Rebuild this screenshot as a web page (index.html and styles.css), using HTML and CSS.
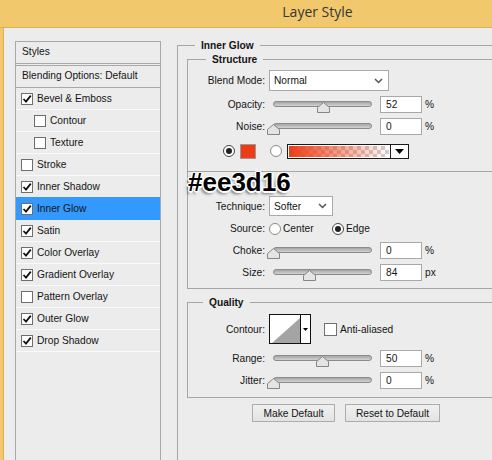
FILE: index.html
```html
<!DOCTYPE html>
<html lang="en">
    <head>
        <meta charset="UTF-8">
        <meta name="viewport" content="width=device-width, initial-scale=1.0">
        <title>Layer Style</title>
        <link rel="stylesheet" href="styles.css">
    </head>
    <body>
        <div class="titlebar">Layer Style</div>
        <div class="window">
            <div class="stylesPanel">
                <div class="head">Styles</div>
                <div class="blending">Blending Options: Default</div>
                <div class="item"><span class="check"><svg width="10" height="10" viewBox="0 0 10 10"><path d="M1.5 5l2.5 2.6 4.8-6" fill="none" stroke="#111" stroke-width="1.8"/></svg></span>Bevel &amp; Emboss</div>
                <div class="item sub"><span class="check"></span>Contour</div>
                <div class="item sub"><span class="check"></span>Texture</div>
                <div class="item"><span class="check"></span>Stroke</div>
                <div class="item"><span class="check"><svg width="10" height="10" viewBox="0 0 10 10"><path d="M1.5 5l2.5 2.6 4.8-6" fill="none" stroke="#111" stroke-width="1.8"/></svg></span>Inner Shadow</div>
                <div class="item active"><span class="check"><svg width="10" height="10" viewBox="0 0 10 10"><path d="M1.5 5l2.5 2.6 4.8-6" fill="none" stroke="#111" stroke-width="1.8"/></svg></span>Inner Glow</div>
                <div class="item"><span class="check"><svg width="10" height="10" viewBox="0 0 10 10"><path d="M1.5 5l2.5 2.6 4.8-6" fill="none" stroke="#111" stroke-width="1.8"/></svg></span>Satin</div>
                <div class="item"><span class="check"><svg width="10" height="10" viewBox="0 0 10 10"><path d="M1.5 5l2.5 2.6 4.8-6" fill="none" stroke="#111" stroke-width="1.8"/></svg></span>Color Overlay</div>
                <div class="item"><span class="check"><svg width="10" height="10" viewBox="0 0 10 10"><path d="M1.5 5l2.5 2.6 4.8-6" fill="none" stroke="#111" stroke-width="1.8"/></svg></span>Gradient Overlay</div>
                <div class="item"><span class="check"></span>Pattern Overlay</div>
                <div class="item"><span class="check"><svg width="10" height="10" viewBox="0 0 10 10"><path d="M1.5 5l2.5 2.6 4.8-6" fill="none" stroke="#111" stroke-width="1.8"/></svg></span>Outer Glow</div>
                <div class="item"><span class="check"><svg width="10" height="10" viewBox="0 0 10 10"><path d="M1.5 5l2.5 2.6 4.8-6" fill="none" stroke="#111" stroke-width="1.8"/></svg></span>Drop Shadow</div>
            </div>

            <div class="options">
                <fieldset class="group outer">
                    <legend>Inner Glow</legend>

                    <fieldset class="group structure">
                        <legend>Structure</legend>
                        <div class="row">
                            <span class="lbl">Blend Mode:</span>
                            <div class="dropdown blendMode">Normal<svg width="9" height="6" viewBox="0 0 9 6"><path d="M1 1l3.5 3.5L8 1" fill="none" stroke="#555" stroke-width="1.5"/></svg></div>
                        </div>
                        <div class="row slideRow">
                            <span class="lbl">Opacity:</span>
                            <div class="slider"><span class="thumb" style="left:52%"><svg width="13" height="11" viewBox="0 0 13 11"><path d="M0.5 10.5V5.5L6.5 0.5l6 5v5z" fill="#e4e4e4" stroke="#858585"/></svg></span></div>
                            <input class="num" type="text" value="52">
                            <span class="unit">%</span>
                        </div>
                        <div class="row">
                            <span class="lbl">Noise:</span>
                            <div class="slider"><span class="thumb" style="left:0%"><svg width="13" height="11" viewBox="0 0 13 11"><path d="M0.5 10.5V5.5L6.5 0.5l6 5v5z" fill="#e4e4e4" stroke="#858585"/></svg></span></div>
                            <input class="num" type="text" value="0">
                            <span class="unit">%</span>
                        </div>
                        <div class="row colorRow">
                            <span class="radio on"></span>
                            <span class="swatch"></span>
                            <span class="radio second"></span>
                            <div class="gradient">
                                <span class="gradientBar"></span>
                                <span class="gradientBtn"><svg width="9" height="5" viewBox="0 0 9 5"><path d="M0 0h9L4.5 5z" fill="#000"/></svg></span>
                            </div>
                        </div>
                    </fieldset>

                    <fieldset class="group elements">
                        <div class="note">#ee3d16</div>
                        <div class="row techRow">
                            <span class="lbl">Technique:</span>
                            <div class="dropdown technique">Softer<svg width="9" height="6" viewBox="0 0 9 6"><path d="M1 1l3.5 3.5L8 1" fill="none" stroke="#555" stroke-width="1.5"/></svg></div>
                        </div>
                        <div class="row sourceRow">
                            <span class="lbl">Source:</span>
                            <span class="option"><span class="radio"></span>Center</span>
                            <span class="option"><span class="radio on"></span>Edge</span>
                        </div>
                        <div class="row">
                            <span class="lbl">Choke:</span>
                            <div class="slider"><span class="thumb" style="left:0%"><svg width="13" height="11" viewBox="0 0 13 11"><path d="M0.5 10.5V5.5L6.5 0.5l6 5v5z" fill="#e4e4e4" stroke="#858585"/></svg></span></div>
                            <input class="num" type="text" value="0">
                            <span class="unit">%</span>
                        </div>
                        <div class="row">
                            <span class="lbl">Size:</span>
                            <div class="slider"><span class="thumb" style="left:37%"><svg width="13" height="11" viewBox="0 0 13 11"><path d="M0.5 10.5V5.5L6.5 0.5l6 5v5z" fill="#e4e4e4" stroke="#858585"/></svg></span></div>
                            <input class="num" type="text" value="84">
                            <span class="unit">px</span>
                        </div>
                    </fieldset>

                    <fieldset class="group quality">
                        <legend>Quality</legend>
                        <div class="row contourRow">
                            <span class="lbl">Contour:</span>
                            <div class="contour">
                                <svg class="curve" width="30" height="28" viewBox="0 0 30 28"><path d="M2 28L30 3v25z" fill="#a4a4a4"/></svg>
                                <span class="contourBtn"><svg width="5" height="3" viewBox="0 0 5 3"><path d="M0 0h5L2.5 3z" fill="#000"/></svg></span>
                            </div>
                            <span class="box"></span>
                            <span>Anti-aliased</span>
                        </div>
                        <div class="row slideRow">
                            <span class="lbl">Range:</span>
                            <div class="slider"><span class="thumb" style="left:51%"><svg width="13" height="11" viewBox="0 0 13 11"><path d="M0.5 10.5V5.5L6.5 0.5l6 5v5z" fill="#e4e4e4" stroke="#858585"/></svg></span></div>
                            <input class="num" type="text" value="50">
                            <span class="unit">%</span>
                        </div>
                        <div class="row">
                            <span class="lbl">Jitter:</span>
                            <div class="slider"><span class="thumb" style="left:0%"><svg width="13" height="11" viewBox="0 0 13 11"><path d="M0.5 10.5V5.5L6.5 0.5l6 5v5z" fill="#e4e4e4" stroke="#858585"/></svg></span></div>
                            <input class="num" type="text" value="0">
                            <span class="unit">%</span>
                        </div>
                    </fieldset>

                    <div class="buttons">
                        <button class="btn makeDefault">Make Default</button>
                        <button class="btn resetDefault">Reset to Default</button>
                    </div>
                </fieldset>
            </div>
        </div>
    </body>
</html>
```

FILE: styles.css
```css
body {
    margin: 0;
    width: 492px;
    height: 460px;
    overflow: hidden;
    background: #f1c86b;
    font-family: "Liberation Sans", Arial, sans-serif;
    font-size: 10.2px;
    color: #141414;
}
.titlebar {
    height: 27px;
    padding-left: 143px;
    line-height: 24px;
    border-bottom: 1px solid #d9b05c;
    text-align: center;
    font-family: "Open Sans", sans-serif;
    font-size: 14px;
    color: #363636;
}
.window {
    display: flex;
    height: 432px;
    margin-left: 3px;
    border-left: 1px solid #d9b05c;
    background: #ececec;
}

/* left list */
.stylesPanel {
    flex: none;
    width: 144px;
    margin: 13px 0 0 11px;
    border: 1px solid #a8a8a8;
    border-bottom: none;
}
.head, .blending {
    height: 21px;
    line-height: 20px;
    padding-left: 6px;
}
.head {
    border-bottom: 3px double #a8a8a8;
}
.blending {
    border-bottom: 1px solid #a8a8a8;
}
.item {
    display: flex;
    align-items: center;
    height: 21px;
    padding-left: 5px;
    border-bottom: 1px solid #fafafa;
}
.item.sub {
    padding-left: 18px;
}
.item.active {
    background: #3399ff;
    border-bottom-color: #3399ff;
    box-shadow: 0 -1px 0 #3399ff;
}
.check {
    display: flex;
    align-items: center;
    justify-content: center;
    flex: none;
    width: 12px;
    height: 12px;
    box-sizing: border-box;
    margin-right: 4px;
    border: 1px solid #6e6e6e;
    background: #fff;
}

/* right side */
.options {
    flex: 1;
    min-width: 0;
    margin-left: 16px;
}
.group {
    margin: 0;
    padding: 0;
    min-width: 0;
    border: 1px solid #a5a5a5;
    border-right: none;
}
.group legend {
    padding: 0 6px;
    font-weight: bold;
    line-height: 13px;
}
.outer {
    box-sizing: border-box;
    height: 421px;
    margin-top: 11px;
    border-bottom: none;
}
.outer > legend {
    margin-left: 17px;
}
.structure {
    margin: 1px 0 0 9px;
    padding: 4px 0 9px;
}
.structure > legend {
    margin-left: 18px;
}
.elements {
    position: relative;
    margin-left: 9px;
    padding: 24px 0 5px;
    border-top: none;
}
.quality {
    margin: 7px 0 0 9px;
    padding: 5px 0 6px;
}
.quality > legend {
    margin-left: 15px;
}

.row {
    display: flex;
    align-items: center;
    height: 22px;
}
.structure .row:first-of-type {
    height: 21px;
}
.slideRow {
    margin-top: 2px;
}
.quality .slideRow {
    margin-top: 3px;
}
.lbl {
    flex: none;
    width: 77px;
    margin-right: 4px;
    text-align: right;
}
.dropdown {
    display: flex;
    align-items: center;
    justify-content: space-between;
    box-sizing: border-box;
    padding: 0 5px 0 4px;
    background: #fff;
    border: 1px solid #a9a9a9;
}
.blendMode {
    width: 120px;
    height: 21px;
}
.technique {
    width: 64px;
    height: 20px;
}
.techRow {
    height: 20px;
}
.sourceRow {
    height: 21px;
    margin-top: 2px;
}
.slider {
    position: relative;
    flex: none;
    box-sizing: border-box;
    width: 99px;
    height: 6px;
    margin-left: 4px;
    border: 1px solid #8b8b8b;
    border-radius: 3px;
    background: linear-gradient(#a6a6a6, #d2d2d2);
}
.thumb {
    position: absolute;
    top: 0;
    margin-left: -7px;
    line-height: 0;
}
.num {
    flex: none;
    box-sizing: border-box;
    width: 42px;
    height: 17px;
    margin: 0 0 0 8px;
    padding: 0 5px;
    border: 1px solid #a9a9a9;
    background: #fff;
    font: inherit;
    color: inherit;
    outline: none;
}
.unit {
    margin-left: 3px;
}
.radio {
    display: flex;
    align-items: center;
    justify-content: center;
    flex: none;
    width: 12px;
    height: 12px;
    box-sizing: border-box;
    border: 1px solid #8a8a8a;
    border-radius: 50%;
    background: #fff;
}
.radio.on {
    border-color: #444;
}
.radio.on::after {
    content: "";
    width: 6px;
    height: 6px;
    border-radius: 50%;
    background: #222;
}
.colorRow {
    margin-top: 3px;
}
.colorRow .radio {
    margin-left: 35px;
}
.colorRow .radio.second {
    margin-left: 14px;
}
.swatch {
    flex: none;
    width: 16px;
    height: 15px;
    box-sizing: border-box;
    margin-left: 5px;
    border: 1px solid #9a9a9a;
    background: #ee3d16;
}
.gradient {
    display: flex;
    flex: none;
    width: 122px;
    height: 15px;
    box-sizing: border-box;
    margin-left: 5px;
    border: 1px solid #1a1a1a;
}
.gradientBar {
    flex: 1;
    border: 1px solid #fff;
    background: linear-gradient(to right, #ee3d16, rgba(238, 61, 22, 0)),
        repeating-conic-gradient(#cfcfcf 0 25%, #fff 0 50%) 0 0 / 8px 8px;
}
.gradientBtn {
    display: flex;
    align-items: center;
    justify-content: center;
    width: 17px;
    border-left: 1px solid #1a1a1a;
    background: #fff;
}
.note {
    position: absolute;
    left: 0;
    top: -3px;
    font-size: 26px;
    line-height: 26px;
    font-weight: bold;
    color: #000;
    text-shadow: -1.5px 0 #fff, 1.5px 0 #fff, 0 -1.5px #fff, 0 1.5px #fff,
        -1px -1px #fff, 1px 1px #fff, 1px -1px #fff, -1px 1px #fff,
        -2px 3px 3px rgba(0, 0, 0, 0.5);
}
.option {
    display: flex;
    align-items: center;
    width: 63px;
}
.option .radio {
    margin-right: 2px;
}
.contourRow {
    height: 30px;
}
.contour {
    display: flex;
    flex: none;
    width: 42px;
    height: 30px;
    box-sizing: border-box;
    border: 1px solid #111;
    background: #fff;
}
.contourBtn {
    display: flex;
    align-items: center;
    justify-content: center;
    width: 9px;
    border-left: 1px solid #111;
}
.box {
    flex: none;
    width: 13px;
    height: 13px;
    box-sizing: border-box;
    margin: 0 3px 0 13px;
    border: 1px solid #707070;
    background: #fff;
}
.buttons {
    display: flex;
    gap: 10px;
    margin: 6px 0 0 74px;
}
.btn {
    height: 18px;
    padding: 0;
    box-sizing: border-box;
    border: 1px solid #acacac;
    background: linear-gradient(#f0f0f0, #e3e3e3);
    font: inherit;
    color: inherit;
}
.makeDefault {
    width: 83px;
}
.resetDefault {
    width: 95px;
}
```
